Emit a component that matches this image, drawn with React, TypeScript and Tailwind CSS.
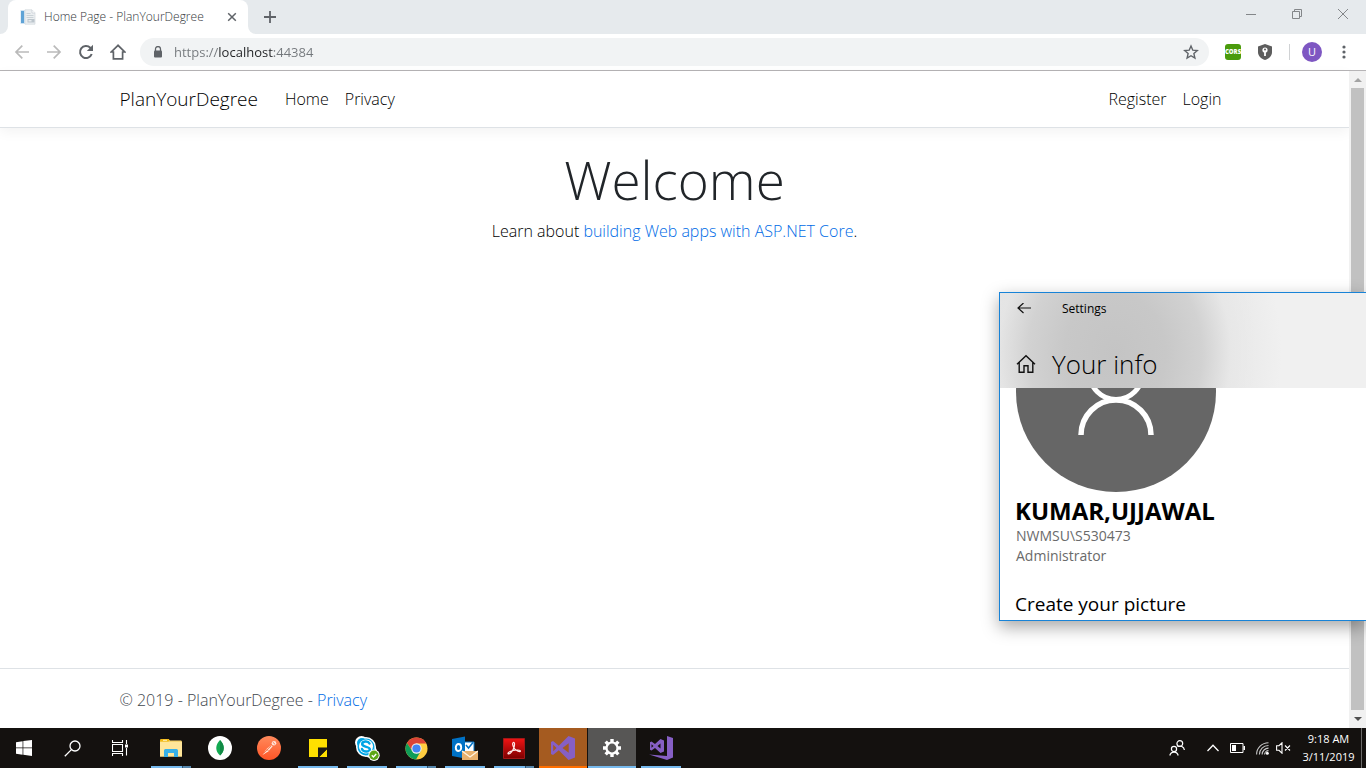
import type { ReactNode } from "react";

type IconProps = { className?: string };

/* ---------- browser icons ---------- */

const PageIcon = ({ className }: IconProps) => (
  <svg viewBox="0 0 16 16" className={className} aria-hidden="true">
    <path d="M.5 1h5v14h-5z" fill="#cfe3f3" />
    <path d="M1 2h3v12H1z" fill="#5fa3d6" />
    <path d="M5 .800h7l3 3v11.400H5z" fill="#eceff1" stroke="#d3d8dc" strokeWidth="0.7" />
    <path d="M12 1v3h3" fill="#fff" stroke="#c5ccd2" strokeWidth="0.7" />
    <path d="M6.500 4.500h4M6.500 6.500h7M6.500 8.500h7" stroke="#c2cad0" strokeWidth="0.8" />
    <path d="M7.500 10h7v3.500h-7z" fill="#bcc5cc" />
    <path d="M8.500 11h3v1.500h-3z" fill="#e9edf0" />
  </svg>
);

const CloseTabIcon = ({ className }: IconProps) => (
  <svg viewBox="0 0 10 10" className={className} aria-hidden="true">
    <path d="M1.200 1.200l7.600 7.600M8.800 1.200L1.200 8.800" stroke="#5f6368" strokeWidth="1.5" />
  </svg>
);

const PlusIcon = ({ className }: IconProps) => (
  <svg viewBox="0 0 12 12" className={className} aria-hidden="true">
    <path d="M6 0v12M0 6h12" stroke="#5f6368" strokeWidth="1.8" />
  </svg>
);

const ArrowIcon = ({ className }: IconProps) => (
  <svg viewBox="0 0 16 16" className={className} fill="none" stroke="currentColor" strokeWidth="1.7" aria-hidden="true">
    <path d="M15 8H2M8.300 1.700L2 8l6.300 6.300" />
  </svg>
);

const ReloadIcon = ({ className }: IconProps) => (
  <svg viewBox="0 0 16 16" className={className} aria-hidden="true">
    <path d="M13.700 10A6 6 0 1 1 12.300 3.800L13.500 5" fill="none" stroke="#5f6368" strokeWidth="2" />
    <path d="M15 .8V7H8.800z" fill="#5f6368" />
  </svg>
);

const HomeOutlineIcon = ({ className }: IconProps) => (
  <svg viewBox="0 0 16 16" className={className} aria-hidden="true">
    <path d="M8 1.300L1.300 8H3.400v6.800h9.200V8h2.100z" fill="none" stroke="#5f6368" strokeWidth="1.700" />
  </svg>
);

const LockIcon = ({ className }: IconProps) => (
  <svg viewBox="0 0 10 12" className={className} aria-hidden="true">
    <path d="M2.500 5V3a2.500 2.500 0 0 1 5 0v2" fill="none" stroke="#5f6368" strokeWidth="1.300" />
    <rect x="1" y="4.500" width="8" height="7" rx="1" fill="#5f6368" />
  </svg>
);

const StarIcon = ({ className }: IconProps) => (
  <svg viewBox="0 0 16 16" className={className} aria-hidden="true">
    <path d="M8 2l1.800 4.200 4.500.4-3.400 3 1 4.400L8 11.700 4.100 14l1-4.400-3.400-3 4.500-.4z" fill="none" stroke="#5f6368" strokeWidth="1.400" />
  </svg>
);

const ShieldIcon = ({ className }: IconProps) => (
  <svg viewBox="0 0 14 16" className={className} aria-hidden="true">
    <path d="M7 0l7 2.500V8c0 4-3 6.800-7 8-4-1.200-7-4-7-8V2.500z" fill="#5d5d5d" />
    <circle cx="7" cy="6" r="2.600" fill="#fff" />
    <circle cx="7" cy="5.600" r="1" fill="#5d5d5d" />
    <path d="M6.100 7.500h1.800V12H6.100z" fill="#fff" />
  </svg>
);

const KebabIcon = ({ className }: IconProps) => (
  <svg viewBox="0 0 4 14" className={className} fill="#5f6368" aria-hidden="true">
    <circle cx="2" cy="2" r="1.600" />
    <circle cx="2" cy="7" r="1.600" />
    <circle cx="2" cy="12" r="1.600" />
  </svg>
);

/* ---------- taskbar icons ---------- */

const WindowsIcon = () => (
  <svg viewBox="0 0 16 16" className="size-4" fill="#fff" aria-hidden="true">
    <path d="M0 2.200L6.600 1.200v6.300H0zM7.300 1.100L16 0v7.500H7.300zM0 8.300h6.600v6.400L0 13.800zM7.300 8.300H16V16l-8.700-1.200z" />
  </svg>
);

const SearchIcon = () => (
  <svg viewBox="0 0 17 17" className="size-[17px]" fill="none" stroke="#fff" strokeWidth="1.300" aria-hidden="true">
    <circle cx="11" cy="6" r="5" />
    <path d="M7.400 9.600L.8 16.200" />
  </svg>
);

const TaskViewIcon = () => (
  <svg viewBox="0 0 16 16" className="size-4" fill="none" stroke="#fff" aria-hidden="true">
    <path d="M.5 0v2.500h10V0M.5 16v-2.500h10V16M.5 4.500h10v7H.5zM14.500 0v4M14.500 8v7.500" strokeWidth="1.100" />
    <path d="M13 4.500h3v3h-3z" fill="#fff" stroke="none" />
  </svg>
);

const ExplorerIcon = () => (
  <svg viewBox="0 0 22 18" className="h-[18px] w-[22px]" aria-hidden="true">
    <path d="M0 1.500Q0 0 1.500 0h7l1.500 1.500h11Q22 1.500 22 3v14.500H0z" fill="#f5d470" />
    <path d="M1.500 0h7l1 1.300-1 1.200H0V1.500Q0 0 1.500 0z" fill="#f4b90f" />
    <path d="M3 .8h4v1H3z" fill="#fff3c0" />
    <path d="M0 3h22v14.500H0z" fill="#ffe69a" />
    <path d="M4 18v-6.500Q4 10 5.500 10h11q1.500 0 1.500 1.500V18h-4v-4H8v4z" fill="#37b0e8" />
  </svg>
);

const MongoIcon = () => (
  <svg viewBox="0 0 24 24" className="size-6" aria-hidden="true">
    <circle cx="12" cy="12" r="12" fill="#fff" />
    <path d="M12 4c5 5 5 11 0 15.500C7 15 7 9 12 4z" fill="#13aa52" />
    <path d="M12 4c5 5 5 11 0 15.500z" fill="#118a45" />
  </svg>
);

const PostmanIcon = () => (
  <svg viewBox="0 0 24 24" className="size-6" aria-hidden="true">
    <defs>
      <linearGradient id="postman" x1="0" y1="0" x2="0" y2="1">
        <stop offset="0" stopColor="#ff8a5c" />
        <stop offset="1" stopColor="#ff5526" />
      </linearGradient>
    </defs>
    <circle cx="12" cy="12" r="12" fill="url(#postman)" />
    <path d="M5.500 19l4-6 5-4 1.200 1.200-4.200 5z" fill="#ffe0d2" />
    <path d="M6.500 17.500l8-8M9.500 13l2 2" stroke="#f15a29" strokeWidth=".7" />
    <circle cx="17" cy="7.300" r="2.300" fill="#ffe3d8" />
    <path d="M15.800 6.200l2.500 2.400" stroke="#f15a29" strokeWidth=".8" />
  </svg>
);

const StickyNotesIcon = () => (
  <svg viewBox="0 0 18 18" className="size-[18px]" aria-hidden="true">
    <path d="M0 0h18v8.500H9V18H0z" fill="#ffe000" />
    <path d="M10.200 18L18 10.200V18z" fill="#ffe000" />
    <path d="M9 18V9h9v1l-8 8z" fill="#1c1a14" />
  </svg>
);

const SkypeIcon = () => (
  <svg viewBox="0 0 25 25" className="size-[25px]" aria-hidden="true">
    <circle cx="6.500" cy="6.500" r="6.500" fill="#fff" />
    <circle cx="15.500" cy="15.500" r="6.500" fill="#fff" />
    <circle cx="11" cy="11" r="10" fill="#fff" />
    <circle cx="7" cy="7" r="5" fill="#00a5e5" />
    <circle cx="15" cy="15" r="5" fill="#00a5e5" />
    <circle cx="11" cy="11" r="8.500" fill="#00a5e5" />
    <circle cx="11" cy="10.500" r="7" fill="#fff" />
    <path d="M14.500 7.500C13 4.500 7 5 7.200 8.200c.2 3.300 7.600 2 7.600 5 0 3.200-6.800 3.200-7.800-.2" fill="none" stroke="#00a5e5" strokeWidth="2.500" strokeLinecap="round" />
    <circle cx="19" cy="19.300" r="5.700" fill="#fff" />
    <circle cx="19" cy="19.300" r="4.700" fill="#5da617" />
    <path d="M16.800 19.300l1.600 1.600 2.800-3" fill="none" stroke="#fff" strokeWidth="1.400" />
  </svg>
);

const ChromeIcon = () => (
  <svg viewBox="0 0 24 24" className="size-[23px]" aria-hidden="true">
    <circle cx="12" cy="12" r="11.500" fill="#ffcd40" />
    <path d="M12 6.800h10.300A11.500 11.500 0 0 0 2.040 6.250L7.500 14.600z" fill="#db4437" />
    <path d="M2.040 6.250A11.500 11.500 0 0 0 11.500 23.500l5-8.900L12 17.200l-4.500-2.600z" fill="#0f9d58" />
    <circle cx="12" cy="12" r="5.400" fill="#f1f1f1" />
    <circle cx="12" cy="12" r="4.300" fill="#4285f4" />
  </svg>
);

const OutlookIcon = () => (
  <svg viewBox="0 0 26 24" className="h-6 w-[26px]" aria-hidden="true">
    <path d="M12 6h10v12H12z" fill="#fff" stroke="#0072c6" />
    <path d="M14 9l2.500 3L21 6.500" fill="none" stroke="#0072c6" strokeWidth="1.500" />
    <path d="M0 3l13-2.500v22L0 20z" fill="#0072c6" />
    <ellipse cx="6.500" cy="11.500" rx="2.700" ry="3.500" fill="none" stroke="#fff" strokeWidth="1.900" />
    <path d="M10 15h16v9H10z" fill="#e9b16d" />
    <path d="M10 15l8 6 8-6" fill="none" stroke="#fff4e2" strokeWidth="1.300" />
  </svg>
);

const AcrobatIcon = () => (
  <svg viewBox="0 0 22 21" className="h-[21px] w-[22px]" aria-hidden="true">
    <defs>
      <linearGradient id="acrobat" x1="0" y1="0" x2="0" y2="1">
        <stop offset="0" stopColor="#f01414" />
        <stop offset="1" stopColor="#7d0000" />
      </linearGradient>
    </defs>
    <path d="M.5.500h21v20H.5z" fill="url(#acrobat)" stroke="#a31717" />
    <path d="M10.300 4.500c1.700-.6 1.400 3 .6 5.200-.8 2.200-3.600 6.800-5.500 6.200-1.700-.7 2.300-3 5-3.500 2.700-.5 7-.8 7 .8 0 1.400-4.200-.3-6-2.700-1.600-2.200-2.400-5.500-1.100-6z" fill="none" stroke="#ffecec" strokeWidth="1.200" />
  </svg>
);

const VisualStudioIcon = () => (
  <svg viewBox="0 0 24 24" className="size-6" fill="#865fc5" aria-hidden="true">
    <path fillRule="evenodd" d="M17.500 0L24 2.600v18.800L17.500 24 7.800 14.300 2 19l-2-1V6l2-1 5.800 4.700zM17.700 7.200L11.500 12l6.200 4.800zM2.200 8.800v6.400L5.500 12z" />
  </svg>
);

const GearIcon = () => (
  <svg viewBox="0 0 18 18" className="size-[18px]" aria-hidden="true">
    <g stroke="#fff" strokeWidth="3.400">
      <path d="M9 0v18M0 9h18M2.640 2.640l12.720 12.720M15.360 2.640L2.640 15.360" />
    </g>
    <circle cx="9" cy="9" r="5.500" fill="#575655" stroke="#fff" strokeWidth="2.200" />
  </svg>
);

const VsInstallerIcon = () => (
  <svg viewBox="0 0 24 24" className="size-6" fill="#865fc5" aria-hidden="true">
    <path d="M18 0l6 2v19.500L18 24 0 18.500l18 1.500z" />
    <path fillRule="evenodd" d="M11.500 3L15 4.500v11L11.500 17 6 12l-3.500 2.500L1 13.800V6.200l1.500-.7L6 8zM11.500 7.500L8.500 10l3 2.500zM2.500 8.300v3.400L4.500 10z" />
  </svg>
);

const PeopleIcon = () => (
  <svg viewBox="0 0 16 16" className="size-4" fill="none" stroke="#fff" strokeWidth="1.200" aria-hidden="true">
    <circle cx="10.800" cy="3.600" r="2.900" />
    <path d="M8.600 6.700A4.500 4.500 0 0 1 15.400 10" />
    <circle cx="5" cy="9" r="2.600" />
    <path d="M.8 15.500a4.300 4.300 0 0 1 8.400 0" />
  </svg>
);

const ChevronUpIcon = () => (
  <svg viewBox="0 0 12 8" className="h-2 w-3" fill="none" stroke="#fff" strokeWidth="1.300" aria-hidden="true">
    <path d="M.5 7L6 1.300 11.500 7" />
  </svg>
);

const BatteryIcon = () => (
  <svg viewBox="0 0 15 10" className="h-[10px] w-[15px]" aria-hidden="true">
    <path d="M.5.500h12.500v9H.5z" fill="none" stroke="#fff" />
    <path d="M2 2h4v6H2zM13.500 3H15v4h-1.500z" fill="#fff" />
  </svg>
);

const WifiIcon = () => (
  <svg viewBox="0 0 13 13" className="size-[13px]" fill="none" stroke="#c9c9c9" strokeWidth="1.100" aria-hidden="true">
    <path d="M.6 12.500C.6 6 6 .8 12.500.8M3.400 12.500c0-5 4-9 9.100-9M6.100 12.500c0-3.500 2.900-6.400 6.400-6.400M8.600 12.500c0-2.100 1.700-3.900 3.900-3.900" />
    <circle cx="11.300" cy="11.300" r="1.500" fill="#fff" stroke="none" />
  </svg>
);

const MutedIcon = () => (
  <svg viewBox="0 0 15 12" className="h-3 w-[15px]" fill="none" stroke="#fff" strokeWidth="1.100" aria-hidden="true">
    <path d="M.6 3.700H3L6 .8v10.400L3 8.300H.6zM9 3.500l5 5M14 3.500l-5 5" />
  </svg>
);

/* ---------- browser chrome ---------- */

function IconButton({ label, children, className = "" }: { label: string; children: ReactNode; className?: string }) {
  return (
    <button type="button" aria-label={label} className={`flex shrink-0 items-center justify-center ${className}`}>
      {children}
    </button>
  );
}

function TabStrip() {
  return (
    <div className="flex h-[34px] shrink-0 items-end bg-[#e6eaed]">
      <div className="w-2 self-stretch bg-white">
        <div className="h-full rounded-br-lg bg-[#e6eaed]" />
      </div>
      <div className="flex h-[34px] w-60 items-center rounded-t-lg bg-white pr-2 pl-3">
        <PageIcon className="size-4" />
        <span className="ml-2 flex-1 truncate text-xs font-light text-[#33373b]">Home Page - PlanYourDegree</span>
        <IconButton label="Close tab" className="size-4">
          <CloseTabIcon className="size-[10px]" />
        </IconButton>
      </div>
      <div className="w-2 self-stretch bg-white">
        <div className="h-full rounded-bl-lg bg-[#e6eaed]" />
      </div>
      <IconButton label="New tab" className="h-full w-7">
        <PlusIcon className="size-3" />
      </IconButton>
      <div className="ml-auto flex h-7 self-start text-[#838689]">
        <IconButton label="Minimize" className="w-[46px]">
          <svg viewBox="0 0 10 10" className="size-[10px]" stroke="currentColor"><path d="M0 5.500h10" /></svg>
        </IconButton>
        <IconButton label="Restore" className="w-[46px]">
          <svg viewBox="0 0 10 10" className="size-[10px]" fill="none" stroke="currentColor"><path d="M.5 2.500h7v7h-7zM2.500 2.500v-2h7v7h-2" /></svg>
        </IconButton>
        <IconButton label="Close" className="w-[46px]">
          <svg viewBox="0 0 10 10" className="size-[10px]" stroke="currentColor"><path d="M0 0l10 10M10 0L0 10" /></svg>
        </IconButton>
      </div>
    </div>
  );
}

function Toolbar() {
  return (
    <div className="flex h-[37px] shrink-0 items-center border-b border-[#b6b4b6] bg-white pr-5 pl-[6px]">
      <IconButton label="Back" className="h-7 w-8">
        <ArrowIcon className="size-4 text-[#bababa]" />
      </IconButton>
      <IconButton label="Forward" className="h-7 w-8">
        <ArrowIcon className="size-4 rotate-180 text-[#bababa]" />
      </IconButton>
      <IconButton label="Reload" className="h-7 w-8">
        <ReloadIcon className="size-4" />
      </IconButton>
      <IconButton label="Home" className="h-7 w-8">
        <HomeOutlineIcon className="size-4" />
      </IconButton>
      <div className="ml-[6px] flex h-7 flex-1 items-center rounded-full bg-[#f1f3f4] pr-[10px] pl-[13px]">
        <LockIcon className="h-3 w-[10px]" />
        <input
          type="text"
          aria-label="Address"
          defaultValue="https://localhost:44384"
          className="ml-[11px] min-w-0 flex-1 bg-[linear-gradient(90deg,#73777b_44px,#202124_44px,#202124_99px,#73777b_99px)] bg-clip-text pt-px text-[13px] text-transparent outline-none"
        />
        <IconButton label="Bookmark this page">
          <StarIcon className="size-4" />
        </IconButton>
      </div>
      <div className="ml-4 flex items-center">
        <IconButton label="CORS extension" className="size-4 rounded-[3px] bg-[#4a9b0c]">
          <span className="text-[6px] leading-none font-extrabold text-white">CORS</span>
        </IconButton>
        <IconButton label="Shield extension" className="ml-[17px]">
          <ShieldIcon className="h-4 w-[14px]" />
        </IconButton>
        <span className="ml-[17px] h-4 w-px bg-[#d0d2d4]" />
        <IconButton label="Profile" className="ml-3 size-5 rounded-full bg-[#7e57c2] text-[11px] text-white">
          U
        </IconButton>
        <IconButton label="Menu" className="ml-5">
          <KebabIcon className="h-[14px] w-1" />
        </IconButton>
      </div>
    </div>
  );
}

function Scrollbar() {
  return (
    <div aria-hidden="true" className="flex w-[17px] shrink-0 flex-col items-center bg-[#f1f1f1]">
      <div className="flex h-[17px] items-center">
        <svg viewBox="0 0 8 4" className="h-1 w-2"><path d="M0 4l4-4 4 4z" fill="#a3a3a3" /></svg>
      </div>
      <div className="w-[13px] flex-1 bg-[#c1c1c1]" />
      <div className="flex h-[18px] items-center">
        <svg viewBox="0 0 8 4" className="h-1 w-2"><path d="M0 0l4 4 4-4z" fill="#505050" /></svg>
      </div>
    </div>
  );
}

/* ---------- web page ---------- */

function WebPage() {
  return (
    <div className="flex min-w-0 flex-1 flex-col bg-white text-base font-light text-black">
      <header className="border-b border-[#dee2e6] shadow-[0_4px_12px_rgba(0,0,0,0.05)]">
        <nav className="mx-auto flex h-14 w-full max-w-[1140px] items-center px-[15px]">
          <a href="#" className="mr-[27px] text-[19px]">PlanYourDegree</a>
          <div className="flex flex-1 gap-4">
            <a href="#">Home</a>
            <a href="#">Privacy</a>
          </div>
          <div className="flex gap-4 pr-2">
            <a href="#">Register</a>
            <a href="#">Login</a>
          </div>
        </nav>
      </header>
      <main className="flex-1 pt-[18px] text-center">
        <h1 className="text-[53px] leading-[67px] text-[#212529]">Welcome</h1>
        <p className="mt-[6px] leading-6">
          Learn about <a href="#" className="text-[#006be6]">building Web apps with ASP.NET Core</a>.
        </p>
      </main>
      <footer className="border-t border-[#dee2e6] text-[#3f474e]">
        <div className="mx-auto flex h-[59px] max-w-[1140px] items-center px-[15px] pt-[2px]">
          <p>
            © 2019 - PlanYourDegree - <a href="#" className="text-[#006be6]">Privacy</a>
          </p>
        </div>
      </footer>
    </div>
  );
}

/* ---------- settings window ---------- */

function SettingsWindow() {
  return (
    <section
      aria-label="Settings"
      className="absolute right-0 bottom-[147px] w-[367px] border-y border-l border-[#1883d7] bg-white text-black shadow-[0_6px_16px_rgba(0,0,0,0.35)]"
    >
      <div className="flex h-[95px] flex-col bg-[radial-gradient(ellipse_145px_170px_at_115px_60px,#c4c4c4_0%,#c8c8c8_35%,#d2d2d2_60%,rgba(228,228,228,0.7)_80%,rgba(240,240,240,0)_115%),linear-gradient(90deg,#e6e6e6,#f0f0f0_70%)]">
        <div className="flex h-8 items-center pl-[17px]">
          <IconButton label="Back">
            <svg viewBox="0 0 14 12" className="h-3 w-[14px]" fill="none" stroke="#111" strokeWidth="1.200"><path d="M14 5H1M6.500 0L1 5l5.500 5" /></svg>
          </IconButton>
          <span className="ml-[31px] text-xs">Settings</span>
        </div>
        <div className="mt-[19px] flex h-10 items-center pl-4">
          <svg viewBox="0 0 20 20" className="size-5" fill="none" stroke="#111" strokeWidth="1.400" aria-hidden="true">
            <path d="M1 10.200L10 1.800l9 8.400M3.200 8.500v9.800H8v-6.500h4v6.500h4.800V8.500" />
          </svg>
          <h2 className="ml-4 text-[26px] font-light">Your info</h2>
        </div>
      </div>
      <div className="pl-[15px]">
        <svg viewBox="0 0 200 104" className="ml-px h-[104px] w-[200px]" role="img" aria-label="Account picture">
          <circle cx="100" cy="4" r="100" fill="#666" />
          <circle cx="100" cy="-15" r="26.500" fill="none" stroke="#fff" strokeWidth="5" />
          <path d="M65 47a35 35 0 0 1 70 0" fill="none" stroke="#fff" strokeWidth="5.500" />
        </svg>
        <h3 className="mt-1 text-2xl leading-[30px] font-bold">KUMAR,UJJAWAL</h3>
        <p className="pl-px text-sm leading-5 text-[#6a6a6a]">
          NWMSU\S530473
          <br />
          Administrator
        </p>
        <h3 className="mt-6 pb-[2px] text-[19px] leading-7">Create your picture</h3>
      </div>
    </section>
  );
}

/* ---------- taskbar ---------- */

type App = { name: string; icon: ReactNode; bg?: string; bar?: string; stacked?: boolean };

const RUNNING = "mx-1 bg-[#76b9ed]";

const apps: App[] = [
  { name: "File Explorer", icon: <ExplorerIcon />, bar: RUNNING, stacked: true },
  { name: "MongoDB Compass", icon: <MongoIcon /> },
  { name: "Postman", icon: <PostmanIcon /> },
  { name: "Sticky Notes", icon: <StickyNotesIcon />, bar: RUNNING },
  { name: "Skype for Business", icon: <SkypeIcon />, bar: RUNNING },
  { name: "Chrome", icon: <ChromeIcon />, bar: RUNNING, stacked: true },
  { name: "Outlook", icon: <OutlookIcon />, bar: RUNNING },
  { name: "Acrobat Reader", icon: <AcrobatIcon />, bar: RUNNING, stacked: true },
  { name: "Visual Studio", icon: <VisualStudioIcon />, bg: "bg-[#a55b20]", bar: "bg-[#ff6f00]" },
  { name: "Settings", icon: <GearIcon />, bg: "bg-[#575655]", bar: "bg-[#76b9ed]" },
  { name: "Visual Studio Installer", icon: <VsInstallerIcon />, bar: RUNNING },
];

function TaskbarApp({ app }: { app: App }) {
  return (
    <button type="button" aria-label={app.name} className={`flex w-12 flex-col ${app.bg ?? ""}`}>
      <span className="flex flex-1 items-center justify-center self-stretch pt-[2px]">{app.icon}</span>
      <span className={`flex h-[2px] justify-end self-stretch ${app.bar ?? ""}`}>
        {app.stacked && <span className="w-[9px] border-l border-[#2f5370] bg-[#5686ab]" />}
      </span>
    </button>
  );
}

function Taskbar() {
  return (
    <footer className="flex h-10 shrink-0 bg-[#14110f] text-white">
      <IconButton label="Start" className="w-12">
        <WindowsIcon />
      </IconButton>
      <IconButton label="Search" className="w-12">
        <SearchIcon />
      </IconButton>
      <IconButton label="Task view" className="w-12">
        <TaskViewIcon />
      </IconButton>
      <div className="ml-[3px] flex gap-px">
        {apps.map((app) => (
          <TaskbarApp key={app.name} app={app} />
        ))}
      </div>
      <div className="ml-auto flex items-center">
        <IconButton label="People" className="mr-[22px]">
          <PeopleIcon />
        </IconButton>
        <div className="flex items-center gap-[11px]">
          <IconButton label="Show hidden icons">
            <ChevronUpIcon />
          </IconButton>
          <IconButton label="Battery">
            <BatteryIcon />
          </IconButton>
          <IconButton label="Network">
            <WifiIcon />
          </IconButton>
          <IconButton label="Volume, muted" className="-ml-1">
            <MutedIcon />
          </IconButton>
        </div>
        <button type="button" className="ml-[5px] w-[65px] text-center text-[11px] leading-[18px]">
          9:18 AM
          <br />
          3/11/2019
        </button>
        <span className="h-10 w-[5px] border-l border-[#6b6a69]" />
      </div>
    </footer>
  );
}

export default function App() {
  return (
    <div className="relative flex min-h-screen flex-col overflow-hidden bg-white font-['Open_Sans','Noto_Sans',sans-serif]">
      <TabStrip />
      <Toolbar />
      <div className="flex flex-1">
        <WebPage />
        <Scrollbar />
      </div>
      <Taskbar />
      <SettingsWindow />
    </div>
  );
}
